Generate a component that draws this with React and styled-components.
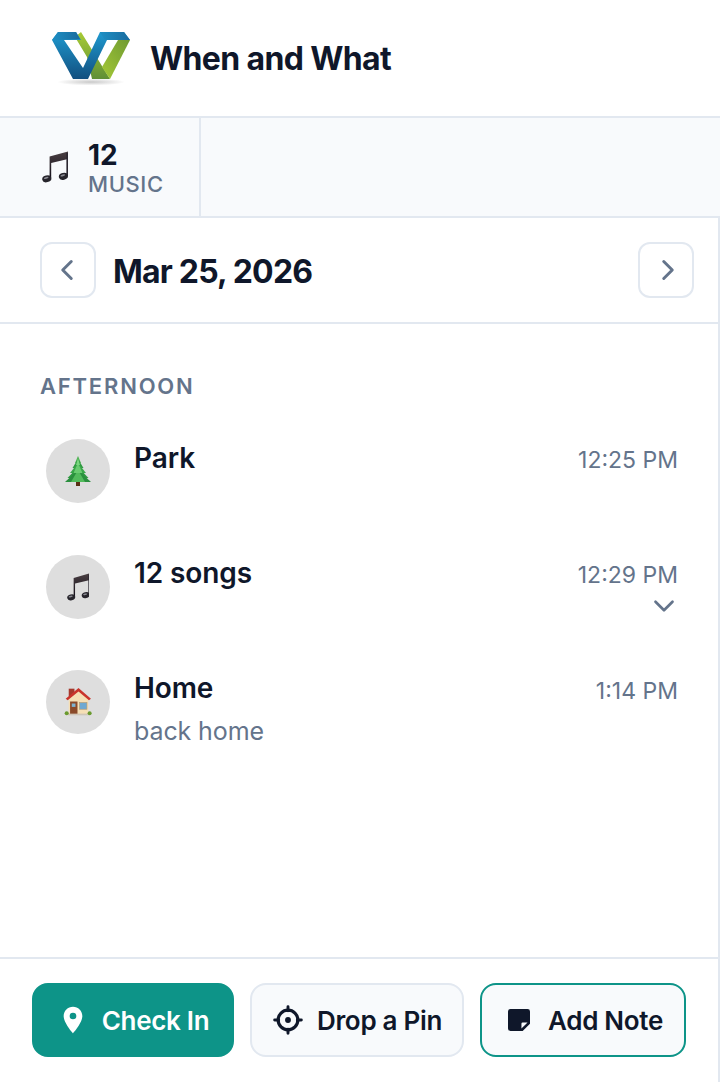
import React from "react";
import styled, { createGlobalStyle } from "styled-components";
import { ChevronLeft, ChevronRight, ChevronDown } from "lucide-react";

const GlobalStyle = createGlobalStyle`
    html, body {
        margin: 0;
        padding: 0;
        background: #fff;
    }
    * {
        box-sizing: border-box;
    }
`;

const Page = styled.div`
    width: 720px;
    height: 1082px;
    display: flex;
    flex-direction: column;
    font-family: Inter, "Liberation Sans", sans-serif;
    color: #0f172a;
    overflow: hidden;
`;

const Header = styled.header`
    height: 118px;
    flex: none;
    display: flex;
    align-items: center;
    gap: 16px;
    padding: 0 0 0 50px;
    border-bottom: 2px solid #e2e8f0;
`;

const BrandName = styled.h1`
    margin: 2px 0 0;
    font-size: 32px;
    line-height: 40px;
    font-weight: 700;
    letter-spacing: -0.64px;
`;

const StatBar = styled.div`
    height: 100px;
    flex: none;
    display: flex;
    background: #f8fafc;
    border-bottom: 2px solid #e2e8f0;
`;

const StatCell = styled.div`
    width: 201px;
    display: flex;
    align-items: center;
    gap: 20px;
    padding-left: 42px;
    border-right: 2px solid #e2e8f0;
`;

const StatText = styled.div`
    display: flex;
    flex-direction: column;
    padding-top: 2px;
`;

const StatValue = styled.span`
    font-size: 28px;
    line-height: 32px;
    font-weight: 700;
`;

const StatLabel = styled.span`
    font-size: 22px;
    line-height: 26px;
    font-weight: 500;
    letter-spacing: 0.6px;
    color: #64748b;
`;

const Main = styled.main`
    flex: 1;
    min-height: 0;
    display: flex;
    flex-direction: column;
    border-right: 2px solid #e2e8f0;
`;

const DateRow = styled.div`
    height: 106px;
    flex: none;
    display: flex;
    align-items: center;
    padding: 0 24px 0 40px;
    border-bottom: 2px solid #e2e8f0;
`;

const NavButton = styled.button`
    width: 56px;
    height: 56px;
    padding: 0 ${(p) => (p.$side === "prev" ? "2px" : "0")} 0 ${(p) => (p.$side === "next" ? "3px" : "0")};
    display: flex;
    align-items: center;
    justify-content: center;
    background: #fff;
    border: 2px solid #e2e8f0;
    border-radius: 12px;
    color: #64748b;
`;

const DateTitle = styled.h2`
    flex: 1;
    margin: 4px 0 0 17px;
    font-size: 32px;
    line-height: 40px;
    font-weight: 700;
    letter-spacing: -0.8px;
`;

const Content = styled.section`
    flex: 1;
    min-height: 0;
    padding: 49px 40px 0;
`;

const SectionLabel = styled.h3`
    margin: 0 0 40.2px;
    font-size: 22px;
    line-height: 26px;
    font-weight: 600;
    letter-spacing: 1.8px;
    color: #64748b;
`;

const Timeline = styled.div`
    display: flex;
    flex-direction: column;
    gap: 51.4px;
    padding-left: 6px;
`;

const Entry = styled.div`
    display: flex;
    align-items: flex-start;
    gap: 24px;
    min-height: 64px;
`;

const Avatar = styled.div`
    width: 64px;
    height: 64px;
    flex: none;
    display: flex;
    align-items: center;
    justify-content: center;
    border-radius: 50%;
    background: #dedede;
`;

const EntryBody = styled.div`
    flex: 1;
    padding-top: 0.4px;
`;

const EntryTitle = styled.div`
    font-size: 28px;
    line-height: 36px;
    font-weight: 600;
    letter-spacing: -0.1px;
`;

const EntryNote = styled.div`
    margin-top: 8px;
    font-size: 25px;
    line-height: 34px;
    letter-spacing: -0.1px;
    color: #64748b;
`;

const EntryMeta = styled.div`
    display: flex;
    flex-direction: column;
    align-items: flex-end;
    height: 64px;
    padding-top: 4.8px;
    color: #64748b;
`;

const EntryTime = styled.span`
    font-size: 23px;
    line-height: 32px;
`;

const Toggle = styled.span`
    display: flex;
    margin: -2px -2.5px 0 0;
`;

const Footer = styled.footer`
    flex: none;
    display: flex;
    gap: 16px;
    padding: 24px 32px 25px;
    border-top: 2px solid #e2e8f0;
`;

const ActionButton = styled.button`
    width: ${(p) => p.$width}px;
    height: 74px;
    padding: 0;
    flex: none;
    display: flex;
    align-items: center;
    justify-content: center;
    gap: 13px;
    font-family: inherit;
    font-size: 26px;
    font-weight: 600;
    letter-spacing: -0.3px;
    white-space: nowrap;
    border-radius: 16px;
    border: 2px solid ${(p) => (p.$variant === "primary" || p.$variant === "accent" ? "#0d9488" : "#e2e8f0")};
    background: ${(p) => (p.$variant === "primary" ? "#0d9488" : "#f8fafc")};
    color: ${(p) => (p.$variant === "primary" ? "#fff" : "#0f172a")};
`;

const Logo = () => (
    <svg width="84" height="60" viewBox="50 26 84 60" aria-hidden="true">
        <defs>
            <linearGradient id="logoBlue" x1="0" y1="0" x2="0" y2="1">
                <stop offset="0" stopColor="#1f9ad0" />
                <stop offset="1" stopColor="#124f7f" />
            </linearGradient>
            <linearGradient id="logoTop" x1="0" y1="0" x2="1" y2="0">
                <stop offset="0" stopColor="#1d8fc4" />
                <stop offset="1" stopColor="#1a6b9e" />
            </linearGradient>
            <linearGradient id="logoGreen" x1="0" y1="0" x2="0" y2="1">
                <stop offset="0" stopColor="#a8cb35" />
                <stop offset="1" stopColor="#5f8f35" />
            </linearGradient>
            <linearGradient id="logoGreenRight" x1="1" y1="0" x2="0" y2="1">
                <stop offset="0" stopColor="#6f9a32" />
                <stop offset="1" stopColor="#a5c936" />
            </linearGradient>
            <radialGradient id="logoShadow">
                <stop offset="0" stopColor="#c9c9c9" />
                <stop offset="1" stopColor="#ffffff" />
            </radialGradient>
        </defs>
        <ellipse cx="91" cy="80" rx="34" ry="3.5" fill="url(#logoShadow)" />
        <polygon points="75,35 81,30 110,77 92,77 87,55" fill="url(#logoGreen)" />
        <polygon points="118,38 130,38 110,77 102,65" fill="url(#logoGreenRight)" />
        <polygon points="52,38 58,30 76,30 81,38 64,38 83,66 100,30 124,30 130,38 107,38 88,77 73,77" fill="url(#logoBlue)" />
        <polygon points="52,38 58,30 76,30 80,37 60,38" fill="url(#logoTop)" />
        <polygon points="100,30 124,30 130,38 107,38 104,37" fill="url(#logoTop)" />
    </svg>
);

const NotesEmoji = ({ height }) => (
    <svg width={(height * 26) / 32} height={height} viewBox="0 0 26 32" aria-hidden="true">
        <defs>
            <linearGradient id="noteBeam" x1="0" y1="0" x2="0" y2="1">
                <stop offset="0" stopColor="#4a3f42" />
                <stop offset="1" stopColor="#14101a" />
            </linearGradient>
        </defs>
        <path d="M7.6 5.6 L26 0.4 V8 L9.2 12 V27 H7.6 Z" fill="url(#noteBeam)" />
        <rect x="24.4" y="2" width="1.6" height="23" fill="#2b2730" />
        <ellipse cx="4.8" cy="27.8" rx="4.6" ry="3.4" transform="rotate(-14 4.8 27.8)" fill="#26242b" />
        <ellipse cx="21.4" cy="25.4" rx="4.6" ry="3.4" transform="rotate(-14 21.4 25.4)" fill="#26242b" />
        <ellipse cx="4.2" cy="26.8" rx="2.4" ry="0.9" transform="rotate(-14 4.2 26.8)" fill="#8b8b93" />
        <ellipse cx="20.8" cy="24.4" rx="2.4" ry="0.9" transform="rotate(-14 20.8 24.4)" fill="#8b8b93" />
    </svg>
);

const TreeEmoji = () => (
    <svg width="26" height="30" viewBox="0 0 26 30" aria-hidden="true">
        <rect x="11" y="25" width="4" height="5" fill="#5a2f14" />
        <polygon points="13,0 16,7 10,7" fill="#4caf50" />
        <polygon points="13,3 18.5,12 7.5,12" fill="#2f9a41" />
        <polygon points="13,7 21,17 5,17" fill="#3aa84a" />
        <polygon points="13,11 23.5,22 2.5,22" fill="#2f9a41" />
        <polygon points="13,14 26,26 0,26" fill="#2a8f3e" />
        <polygon points="13,14 20,26 6,26" fill="#52bb5c" />
        <polygon points="13,7 17.5,17 8.5,17" fill="#69cb70" />
        <polygon points="13,2 15,9 11,9" fill="#7ad67e" />
    </svg>
);

const HouseEmoji = () => (
    <svg width="29" height="29" viewBox="105 785 84 86" aria-hidden="true">
        <rect x="118" y="790" width="17" height="22" fill="#a5382c" />
        <polygon points="118,820 147,796 176,820 176,867 118,867" fill="#f5dfb5" />
        <polygon points="109,820 147,788 184,820 178,824 147,798 115,824" fill="#c9342c" />
        <rect x="122" y="828" width="22" height="40" fill="#8a4a2a" />
        <rect x="127" y="834" width="11" height="10" fill="#7fb3d0" />
        <rect x="150" y="831" width="22" height="20" fill="#6ea9d2" stroke="#b79c72" strokeWidth="2" />
        <rect x="116" y="864" width="62" height="5" fill="#cfc6b8" />
        <circle cx="112" cy="863" r="6" fill="#6a9a2e" />
        <circle cx="180" cy="863" r="6" fill="#6a9a2e" />
    </svg>
);

const PinIcon = () => (
    <svg width="32" height="32" viewBox="0 0 24 24" fill="currentColor" aria-hidden="true">
        <path d="M12 2C8.13 2 5 5.13 5 9c0 5.25 7 13 7 13s7-7.75 7-13c0-3.87-3.13-7-7-7zm0 9.5a2.5 2.5 0 1 1 0-5 2.5 2.5 0 0 1 0 5z" />
    </svg>
);

const TargetIcon = () => (
    <svg width="32" height="32" viewBox="0 0 24 24" fill="currentColor" aria-hidden="true">
        <circle cx="12" cy="12" r="7.4" fill="none" stroke="currentColor" strokeWidth="2.4" />
        <path d="M12 2v3M12 19v3M2 12h3M19 12h3" fill="none" stroke="currentColor" strokeWidth="2.2" strokeLinecap="round" />
        <circle cx="12" cy="12" r="2.2" />
    </svg>
);

const NoteIcon = () => (
    <svg width="32" height="32" viewBox="-1.1 -1.1 26.2 26.2" fill="currentColor" aria-hidden="true">
        <path d="M19 3H5a2 2 0 0 0-2 2v14a2 2 0 0 0 2 2h10l6-6V5a2 2 0 0 0-2-2zm-5 16v-4a1 1 0 0 1 1-1h4z" />
    </svg>
);

const entries = [
    { title: "Park", time: "12:25 PM", icon: <TreeEmoji /> },
    { title: "12 songs", time: "12:29 PM", icon: <NotesEmoji height={28} />, expandable: true },
    { title: "Home", time: "1:14 PM", note: "back home", icon: <HouseEmoji /> },
];

const App = () => {
    return (
        <Page>
            <GlobalStyle />
            <Header>
                <Logo />
                <BrandName>When and What</BrandName>
            </Header>
            <StatBar>
                <StatCell>
                    <NotesEmoji height={32} />
                    <StatText>
                        <StatValue>12</StatValue>
                        <StatLabel>MUSIC</StatLabel>
                    </StatText>
                </StatCell>
            </StatBar>
            <Main>
                <DateRow>
                    <NavButton $side="prev" aria-label="Previous day">
                        <ChevronLeft size={34} strokeWidth={2.1} />
                    </NavButton>
                    <DateTitle>Mar 25, 2026</DateTitle>
                    <NavButton $side="next" aria-label="Next day">
                        <ChevronRight size={34} strokeWidth={2.1} />
                    </NavButton>
                </DateRow>
                <Content>
                    <SectionLabel>AFTERNOON</SectionLabel>
                    <Timeline>
                        {entries.map((entry) => (
                            <Entry key={entry.title}>
                                <Avatar>{entry.icon}</Avatar>
                                <EntryBody>
                                    <EntryTitle>{entry.title}</EntryTitle>
                                    {entry.note && <EntryNote>{entry.note}</EntryNote>}
                                </EntryBody>
                                <EntryMeta>
                                    <EntryTime>{entry.time}</EntryTime>
                                    {entry.expandable && (
                                        <Toggle>
                                            <ChevronDown size={34} strokeWidth={1.9} />
                                        </Toggle>
                                    )}
                                </EntryMeta>
                            </Entry>
                        ))}
                    </Timeline>
                </Content>
                <Footer>
                    <ActionButton $variant="primary" $width={202}>
                        <PinIcon />
                        Check In
                    </ActionButton>
                    <ActionButton $width={214}>
                        <TargetIcon />
                        Drop a Pin
                    </ActionButton>
                    <ActionButton $variant="accent" $width={206}>
                        <NoteIcon />
                        Add Note
                    </ActionButton>
                </Footer>
            </Main>
        </Page>
    );
};

export default App;
